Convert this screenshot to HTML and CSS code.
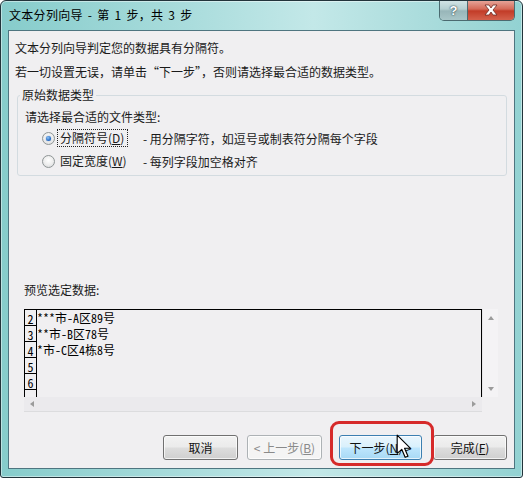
FILE: index.html
```html
<!DOCTYPE html>
<html lang="zh-CN">
<head>
  <meta charset="UTF-8">
  <title>文本分列向导</title>
  <link rel="stylesheet" href="styles.css">
</head>
<body>
  <div class="window">
    <div class="titlebar">
      <span class="title">文本分列向导 - 第 1 步，共 3 步</span>
      <div class="caption-btns">
        <span class="cap help">?</span>
        <span class="cap close">
          <svg width="16" height="12" viewBox="0 0 16 12">
            <path d="M2 1 L6 1 L8 4 L10 1 L14 1 L10 6 L14 11 L10 11 L8 8 L6 11 L2 11 L6 6 Z" fill="#fff" stroke="#6b2a22" stroke-width="0.8"/>
          </svg>
        </span>
      </div>
    </div>

    <div class="client">
      <p class="intro">文本分列向导判定您的数据具有分隔符。</p>
      <p class="intro2">若一切设置无误，请单击“下一步”，否则请选择最合适的数据类型。</p>

      <fieldset class="group">
        <legend>原始数据类型</legend>
        <div class="filetype">请选择最合适的文件类型:</div>
        <div class="option">
          <span class="radio checked"></span>
          <span class="opt-label focused">分隔符号(<u>D</u>)</span>
          <span class="desc">- 用分隔字符，如逗号或制表符分隔每个字段</span>
        </div>
        <div class="option">
          <span class="radio"></span>
          <span class="opt-label">固定宽度(<u>W</u>)</span>
          <span class="desc">- 每列字段加空格对齐</span>
        </div>
      </fieldset>

      <div class="preview-label">预览选定数据:</div>
      <div class="preview">
        <div class="data">
          <div class="row"><span class="num">2</span><span class="cell">***市-A区89号</span></div>
          <div class="row"><span class="num">3</span><span class="cell">**市-B区78号</span></div>
          <div class="row"><span class="num">4</span><span class="cell">*市-C区4栋8号</span></div>
          <div class="row"><span class="num">5</span><span class="cell"></span></div>
          <div class="row"><span class="num">6</span><span class="cell"></span></div>
          <div class="row"><span class="num"></span><span class="cell"></span></div>
        </div>
        <div class="vscroll">
          <span class="arrow up"></span>
          <span class="arrow down"></span>
        </div>
        <div class="hscroll">
          <span class="arrow left"></span>
          <span class="arrow right"></span>
        </div>
        <div class="corner"></div>
      </div>

      <div class="buttons">
        <button class="btn cancel">取消</button>
        <button class="btn back" disabled>&lt; 上一步(<u>B</u>)</button>
        <button class="btn next">下一步(<u>N</u>) &gt;</button>
        <button class="btn finish">完成(<u>F</u>)</button>
      </div>
    </div>

    <div class="highlight"></div>
    <svg class="cursor" width="16" height="25" viewBox="0 0 14 22">
      <path d="M1 1 L1 17 L5 13.5 L8 20.5 L10.5 19.5 L7.5 12.5 L12.5 12.5 Z" fill="#fff" stroke="#000" stroke-width="1" stroke-linejoin="round"/>
    </svg>
  </div>
</body>
</html>
```

FILE: styles.css
```css
html, body {
  margin: 0;
  padding: 0;
  background: #fff;
}

body {
  font-family: "Noto Sans CJK SC", "Noto Sans", sans-serif;
  font-size: 12px;
  color: #1a1a1a;
}

p {
  margin: 0;
}

.window {
  position: relative;
  width: 523px;
  height: 478px;
  box-sizing: border-box;
  border: 1px solid #22343b;
  border-radius: 6px 6px 3px 3px;
  background: linear-gradient(to right, #86cccb 0%, #a9dcdc 35%, #c3e8e8 60%, #a6dada 85%, #92d2d2 100%);
  box-shadow: inset 0 0 0 1px rgba(255, 255, 255, 0.45);
  display: flex;
  flex-direction: column;
  overflow: hidden;
}

/* title bar */

.titlebar {
  height: 29px;
  flex-shrink: 0;
  display: flex;
  align-items: flex-start;
}

.title {
  margin: 6px 0 0 8px;
  line-height: 16px;
  color: #000;
  word-spacing: 2px;
  letter-spacing: 0.3px;
}

.caption-btns {
  margin: -1px 7px 0 auto;
  display: flex;
  height: 20px;
  border: 1px solid #4b6a70;
  border-top: none;
  border-radius: 0 0 5px 5px;
  overflow: hidden;
}

.cap {
  display: flex;
  align-items: center;
  justify-content: center;
  height: 20px;
}

.help {
  width: 27px;
  border-right: 1px solid #4b6a70;
  background: linear-gradient(#d4e6e7 0%, #b5cfd1 45%, #98b6b9 55%, #a9c6c8 100%);
  color: #fff;
  font-family: "Liberation Sans", sans-serif;
  font-weight: bold;
  font-size: 13px;
  text-shadow: 0 0 2px #2f4c52, 0 0 1px #2f4c52;
}

.close {
  width: 46px;
  background: linear-gradient(#e8aa9f 0%, #d56a58 45%, #c23c28 55%, #d4614c 100%);
}

/* client area */

.client {
  flex: 1;
  margin: 0 7px 8px;
  border: 1px solid #4e7580;
  background: #f0eff1;
  padding: 0 7px 0 6px;
  display: flex;
  flex-direction: column;
}

.intro {
  margin-top: 7px;
  line-height: 20px;
}

.intro2 {
  margin-top: 4px;
  line-height: 20px;
}

.group {
  margin: 5px 0 0 2px;
  padding: 0 2px 3px 2px;
  border: 1px solid #d3dbe0;
  border-radius: 3px;
  min-width: 0;
}

.group legend {
  padding: 0 2px;
  line-height: 16px;
}

.filetype {
  margin: 5px 0 0 5px;
  line-height: 18px;
}

.option {
  display: flex;
  align-items: center;
  height: 22px;
  margin-top: 1px;
  padding-left: 22px;
}

.radio {
  width: 13px;
  height: 13px;
  box-sizing: border-box;
  border-radius: 50%;
  border: 1px solid #8f9596;
  background: radial-gradient(circle at 50% 40%, #ffffff 0%, #eeeeee 50%, #d2d4d6 100%);
  display: flex;
  align-items: center;
  justify-content: center;
  flex-shrink: 0;
}

.radio.checked::after {
  content: "";
  width: 5px;
  height: 5px;
  border-radius: 50%;
  background: radial-gradient(circle at 40% 35%, #8fc4f5 0%, #2a6fc9 60%, #1a4f9a 100%);
  box-shadow: 0 0 1px #1a4f9a;
}

.opt-label {
  width: 76px;
  box-sizing: border-box;
  margin-left: 2px;
  padding: 0 2px;
  border: 1px dotted transparent;
  line-height: 16px;
}

.opt-label.focused {
  border-color: #222;
  width: 71px;
  margin-right: 5px;
}

.desc {
  margin-left: 10px;
}

/* preview */

.preview-label {
  margin: 105px 0 0 9px;
  line-height: 18px;
}

.preview {
  margin: 10px 0 0 9px;
  display: grid;
  grid-template-columns: 458px 16px;
  grid-template-rows: 88px 15px;
}

.data {
  border: 1px solid #000;
  border-bottom: none;
  overflow: hidden;
  font-family: "Noto Sans Mono CJK SC", "Liberation Mono", "Noto Sans CJK SC", monospace;
  font-size: 12px;
  line-height: 16px;
  color: #000;
}

.row {
  display: flex;
  height: 16px;
}

.num {
  width: 12px;
  flex-shrink: 0;
  box-sizing: border-box;
  border-right: 1px solid #000;
  border-bottom: 1px solid #000;
  text-align: center;
  line-height: 17px;
}

.cell {
  white-space: pre;
}

.vscroll {
  background: #f4f3f5;
  border-left: 1px solid #e6e6e8;
  display: flex;
  flex-direction: column;
  justify-content: space-between;
  align-items: center;
  padding: 7px 0 6px;
  box-sizing: border-box;
}

.hscroll {
  background: #ebeaed;
  border-bottom: 1px solid #dcdcde;
  display: flex;
  justify-content: space-between;
  align-items: center;
  padding: 0 6px;
}

.corner {
  background: #f0eff1;
}

.arrow {
  width: 0;
  height: 0;
  border: 0 solid transparent;
}

.arrow.up {
  border-width: 0 3.5px 4px;
  border-bottom-color: #9b9b9b;
}

.arrow.down {
  border-width: 4px 3.5px 0;
  border-top-color: #9b9b9b;
}

.arrow.left {
  border-width: 3.5px 4px 3.5px 0;
  border-right-color: #9b9b9b;
}

.arrow.right {
  border-width: 3.5px 0 3.5px 4px;
  border-left-color: #9b9b9b;
}

/* buttons */

.buttons {
  margin-top: 23px;
  display: flex;
  justify-content: flex-end;
}

.btn {
  height: 25px;
  box-sizing: border-box;
  border: 1px solid #707070;
  border-radius: 3px;
  background: linear-gradient(#f2f2f2 0%, #ebebeb 48%, #dddddd 52%, #cfcfcf 100%);
  box-shadow: inset 0 0 0 1px rgba(255, 255, 255, 0.7);
  font-family: "Noto Sans CJK SC", sans-serif;
  font-size: 12px;
  color: #111;
  padding: 0;
}

.cancel {
  width: 75px;
}

.back {
  width: 75px;
  margin-left: 9px;
  border-color: #adb2b5;
  background: #f4f4f4;
  color: #8a8a8a;
}

.next {
  width: 83px;
  margin-left: 17px;
  border-color: #3c7fb1;
  background: linear-gradient(#eaf6fd 0%, #d9f0fc 48%, #bee6fd 52%, #a7d9f5 100%);
}

.finish {
  width: 74px;
  margin-left: 11px;
}

/* overlays */

.highlight {
  position: absolute;
  left: 329px;
  top: 420px;
  width: 104px;
  height: 45px;
  box-sizing: border-box;
  border: 3px solid #d62a2a;
  border-radius: 9px;
}

.cursor {
  position: absolute;
  left: 395px;
  top: 433px;
}
```
